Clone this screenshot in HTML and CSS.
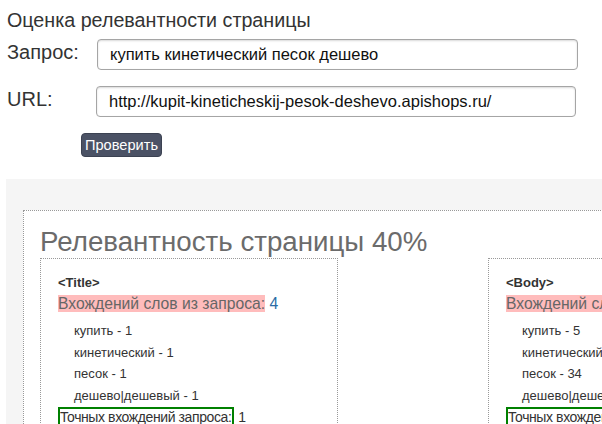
FILE: index.html
```html
<!DOCTYPE html>
<html lang="ru">
<head>
    <meta charset="UTF-8">
    <title>Оценка релевантности страницы</title>
    <link rel="stylesheet" href="styles.css">
</head>
<body>
    <div class="checker">
        <div class="checker-title">Оценка релевантности страницы</div>
        <form class="checker-form">
            <label class="field-label" for="query">Запрос:</label>
            <input class="field-input" id="query" type="text" value="купить кинетический песок дешево">
            <label class="field-label" for="url">URL:</label>
            <input class="field-input url-input" id="url" type="text" value="http://kupit-kineticheskij-pesok-deshevo.apishops.ru/">
            <span></span>
            <div><button class="check-btn" type="button">Проверить</button></div>
        </form>
    </div>

    <div class="result">
        <div class="result-frame">
            <h1 class="result-heading">Релевантность страницы 40%</h1>
            <div class="result-cols">
                <div class="result-col">
                    <div class="col-tag">&lt;Title&gt;</div>
                    <div class="col-line"><span class="mark-bad">Вхождений слов из запроса:</span> <span class="count">4</span></div>
                    <ul class="word-list">
                        <li>купить - 1</li>
                        <li>кинетический - 1</li>
                        <li>песок - 1</li>
                        <li>дешево|дешевый - 1</li>
                    </ul>
                    <div class="col-line exact"><span class="mark-good">Точных вхождений запроса:</span> 1</div>
                </div>
                <div class="result-col">
                    <div class="col-tag">&lt;Body&gt;</div>
                    <div class="col-line"><span class="mark-bad">Вхождений слов из запроса:</span> <span class="count">4</span></div>
                    <ul class="word-list">
                        <li>купить - 5</li>
                        <li>кинетический - 2</li>
                        <li>песок - 34</li>
                        <li>дешево|дешевый - 3</li>
                    </ul>
                    <div class="col-line exact"><span class="mark-good">Точных вхождений запроса:</span> 1</div>
                </div>
            </div>
        </div>
    </div>
</body>
</html>
```

FILE: styles.css
```css
body {
    margin: 0;
    padding: 0;
    overflow: hidden;
    background: #fff;
    font-family: "Liberation Sans", Arial, sans-serif;
    color: #333;
}
.checker {
    padding: 9px 7px 0;
}
.checker-title {
    font-size: 19.7px;
    line-height: 22px;
}
.checker-form {
    display: grid;
    grid-template-columns: 89px 482px;
    row-gap: 16px;
    margin-top: 8px;
}
.field-label {
    font-size: 20px;
    line-height: 24px;
    padding-top: 1px;
}
.field-input {
    box-sizing: border-box;
    height: 31px;
    padding: 0 12px;
    border: 1px solid #a5a5a5;
    border-radius: 4px;
    box-shadow: inset 0 1px 2px rgba(0, 0, 0, 0.15);
    font-family: inherit;
    font-size: 16.5px;
    color: #111;
    margin-left: 1px;
}
.url-input {
    margin-left: 0;
    width: 480px;
}
.check-btn {
    margin: 0 0 0 -15px;
    height: 24px;
    padding: 0 3px;
    background: #4b5265;
    border: 1px solid #3c4252;
    border-radius: 4px;
    color: #fff;
    font-family: inherit;
    font-size: 14.6px;
    cursor: pointer;
}
.result {
    margin: 22px 0 0 6px;
    width: 900px;
    padding: 31px 17px 20px;
    background: #f5f5f5;
}
.result-frame {
    background: #fff;
    border: 1px dotted #999;
    padding: 0 16px 20px;
}
.result-heading {
    margin: 15px 0 0;
    font-size: 27.7px;
    font-weight: normal;
    line-height: 32px;
    color: #6b6b6b;
}
.result-cols {
    display: flex;
    gap: 150px;
}
.result-col {
    width: 262px;
    border: 1px dotted #999;
    padding: 15px 17px 10px;
}
.col-tag {
    font-size: 13px;
    font-weight: bold;
    line-height: 18px;
}
.col-line {
    font-size: 15.7px;
    line-height: 19px;
    margin-top: 2px;
}
.col-line.exact {
    font-size: 14px;
    line-height: 18px;
    margin-top: 2px;
}
.mark-bad {
    background: #ffbcbc;
    color: #666;
}
.mark-good {
    border: 2px solid #008000;
    padding-right: 1px;
    letter-spacing: -0.4px;
}
.count {
    color: #2a6ca5;
}
.word-list {
    list-style: none;
    margin: 7px 0 0;
    padding: 0 0 0 16px;
    font-size: 13px;
}
.word-list li {
    line-height: 21.5px;
}
```
